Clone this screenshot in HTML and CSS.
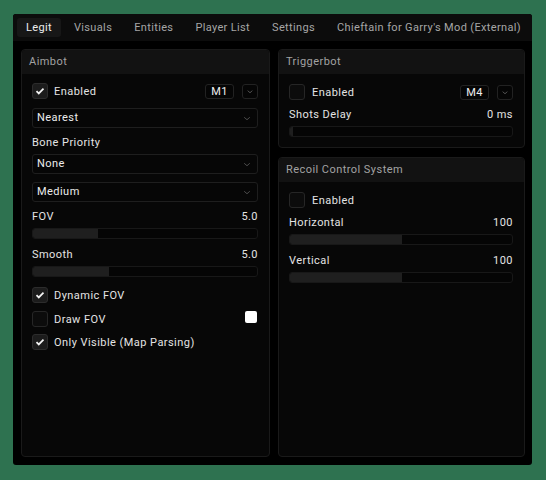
FILE: index.html
```html
<!DOCTYPE html>
<html>
<head>
<meta charset="utf-8">
<link rel="stylesheet" href="styles.css">
</head>
<body>
<div class="window">
  <div class="tabbar">
    <div class="tab active">Legit</div>
    <div class="tab">Visuals</div>
    <div class="tab">Entities</div>
    <div class="tab">Player List</div>
    <div class="tab">Settings</div>
    <div class="tab">Chieftain for Garry's Mod (External)</div>
  </div>
  <div class="content">
    <div class="panel full">
      <div class="phead">Aimbot</div>
      <div class="pbody left">
        <div class="row">
          <div class="cb checked"><svg viewBox="0 0 16 16"><path d="M4 8.2l2.6 2.6L12 5.4"/></svg></div>
          <span class="cblabel">Enabled</span>
          <span class="spacer"></span>
          <div class="keybtn">M1</div>
          <div class="arrbtn"><svg viewBox="0 0 16 15"><path d="M5.5 6.5l2.5 2.5 2.5-2.5"/></svg></div>
        </div>
        <div class="combo g9">Nearest<svg viewBox="0 0 10 6"><path d="M1.5 1.5l3.5 3 3.5-3"/></svg></div>
        <div class="label g9">Bone Priority</div>
        <div class="combo g5">None<svg viewBox="0 0 10 6"><path d="M1.5 1.5l3.5 3 3.5-3"/></svg></div>
        <div class="combo g8">Medium<svg viewBox="0 0 10 6"><path d="M1.5 1.5l3.5 3 3.5-3"/></svg></div>
        <div class="label g9"><span>FOV</span><span>5.0</span></div>
        <div class="slider g5"><div class="fill" style="width:29%"></div></div>
        <div class="label g10"><span>Smooth</span><span>5.0</span></div>
        <div class="slider g5"><div class="fill" style="width:34%"></div></div>
        <div class="row g10">
          <div class="cb checked"><svg viewBox="0 0 16 16"><path d="M4 8.2l2.6 2.6L12 5.4"/></svg></div>
          <span class="cblabel">Dynamic FOV</span>
        </div>
        <div class="row g8">
          <div class="cb"></div>
          <span class="cblabel">Draw FOV</span>
          <span class="spacer"></span>
          <div class="swatch"></div>
        </div>
        <div class="row g7">
          <div class="cb checked"><svg viewBox="0 0 16 16"><path d="M4 8.2l2.6 2.6L12 5.4"/></svg></div>
          <span class="cblabel">Only Visible (Map Parsing)</span>
        </div>
      </div>
    </div>
    <div class="col">
      <div class="panel">
        <div class="phead">Triggerbot</div>
        <div class="pbody">
          <div class="row">
            <div class="cb"></div>
            <span class="cblabel wide">Enabled</span>
            <span class="spacer"></span>
            <div class="keybtn">M4</div>
            <div class="arrbtn"><svg viewBox="0 0 16 15"><path d="M5.5 6.5l2.5 2.5 2.5-2.5"/></svg></div>
          </div>
          <div class="label g9"><span>Shots Delay</span><span>0 ms</span></div>
          <div class="slider g5"><div class="fill" style="width:1.5%"></div></div>
        </div>
      </div>
      <div class="panel full">
        <div class="phead">Recoil Control System</div>
        <div class="pbody">
          <div class="row">
            <div class="cb"></div>
            <span class="cblabel wide">Enabled</span>
          </div>
          <div class="label g9"><span>Horizontal</span><span>100</span></div>
          <div class="slider g5"><div class="fill" style="width:50.5%"></div></div>
          <div class="label g10"><span>Vertical</span><span>100</span></div>
          <div class="slider g5"><div class="fill" style="width:50.5%"></div></div>
        </div>
      </div>
    </div>
  </div>
</div>
</body>
</html>
```

FILE: styles.css
```css
html, body {
  margin: 0;
  padding: 0;
}
body {
  background: #2e7250;
  width: 546px;
  height: 480px;
  overflow: hidden;
  font-family: Roboto, "Liberation Sans", sans-serif;
  font-size: 11px;
  letter-spacing: 0.45px;
  color: #e4e4e4;
}
.window {
  margin: 14px 0 0 13px;
  width: 519px;
  height: 451px;
  background: #000;
  border-radius: 3px;
  display: flex;
  flex-direction: column;
  overflow: hidden;
}
.tabbar {
  height: 27px;
  box-sizing: border-box;
  background: #0c0c0c;
  padding: 4px 4px;
  display: flex;
  gap: 4px;
  letter-spacing: 0.35px;
}
.tab {
  height: 19px;
  line-height: 19px;
  padding: 0 9px;
  color: #a6a6a6;
  border-radius: 3px;
  white-space: nowrap;
}
.tab.active {
  background: #171717;
  color: #ececec;
}
.content {
  flex: 1;
  display: flex;
  gap: 8px;
  padding: 8px 7px 8px 8px;
  min-height: 0;
}
.col {
  flex: 1;
  display: flex;
  flex-direction: column;
  gap: 9px;
}
.panel {
  flex: 1;
  background: #070707;
  border: 1px solid #1a1a1a;
  border-radius: 4px;
  display: flex;
  flex-direction: column;
  overflow: hidden;
}
.col .panel { flex: none; }
.col .panel.full { flex: 1; }
.phead {
  height: 24px;
  line-height: 24px;
  background: #121212;
  color: #a2a2a2;
  padding-left: 7px;
  flex: none;
}
.pbody {
  padding: 10px 11px 10px 10px;
  display: flex;
  flex-direction: column;
}
.pbody.left { padding-top: 9px; }
.row {
  height: 16px;
  line-height: 15px;
  display: flex;
  align-items: center;
}
.cb {
  width: 16px;
  height: 16px;
  box-sizing: border-box;
  border: 1px solid #262626;
  background: #0c0c0c;
  border-radius: 3px;
  flex: none;
}
.cb.checked { background: #1c1c1c; border-color: #2c2c2c; }
.cb svg {
  width: 14px;
  height: 14px;
  display: block;
  fill: none;
  stroke: #f4f4f4;
  stroke-width: 2;
}
.cblabel { margin-left: 6px; }
.cblabel.wide { margin-left: 7px; }
.spacer { flex: 1; }
.keybtn {
  width: 29px;
  height: 15px;
  box-sizing: border-box;
  border: 1px solid #222;
  border-radius: 3px;
  background: #050505;
  line-height: 13px;
  text-align: center;
  color: #efefef;
}
.arrbtn {
  width: 16px;
  height: 15px;
  margin-left: 8px;
  box-sizing: border-box;
  border: 1px solid #222;
  border-radius: 3px;
  background: #050505;
}
.arrbtn svg {
  width: 14px;
  height: 13px;
  display: block;
  fill: none;
  stroke: #6a6a6a;
  stroke-width: 1;
}
.combo {
  height: 20px;
  box-sizing: border-box;
  border: 1px solid #1e1e1e;
  border-radius: 3px;
  background: #060606;
  padding: 0 6px 0 4px;
  line-height: 18px;
  display: flex;
  justify-content: space-between;
  align-items: center;
  color: #ececec;
}
.combo svg {
  width: 8px;
  height: 5px;
  fill: none;
  stroke: #5e5e5e;
  stroke-width: 1;
}
.label {
  height: 12px;
  line-height: 12px;
  display: flex;
  justify-content: space-between;
}
.slider {
  height: 11px;
  box-sizing: border-box;
  border: 1px solid #181818;
  background: #050505;
  border-radius: 3px;
  overflow: hidden;
}
.fill {
  height: 100%;
  background: #1f1f1f;
}
.swatch {
  width: 12px;
  height: 12px;
  background: #fff;
  border-radius: 2px;
  margin-right: 1px;
  margin-top: -4px;
}
.g5 { margin-top: 5px; }
.g7 { margin-top: 7px; }
.g8 { margin-top: 8px; }
.g9 { margin-top: 9px; }
.g10 { margin-top: 10px; }
```
